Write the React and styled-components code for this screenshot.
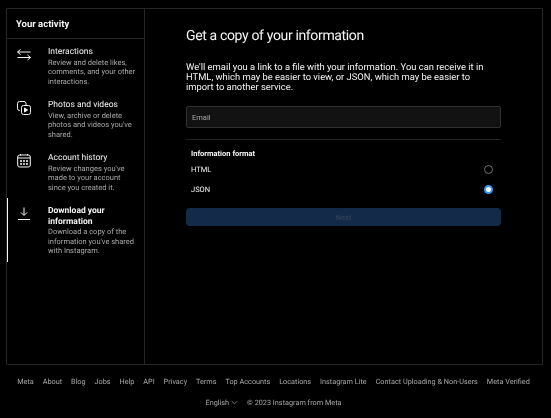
import styled, { createGlobalStyle } from "styled-components";

const GlobalStyle = createGlobalStyle`
  html, body {
    margin: 0;
    background: #000;
    font-family: Roboto, "Liberation Sans", sans-serif;
    color: #f5f5f5;
    text-rendering: geometricPrecision;
  }
`;

const activityItems = [
  {
    title: "Interactions",
    text: "Review and delete likes, comments, and your other interactions.",
    icon: (
      <>
        <path d="M3.5 1.5.5 4l3 2.5" />
        <path d="M.5 4h13" />
        <path d="M10.5 7l3 2.5-3 2.5" />
        <path d="M.5 9.5h13" />
      </>
    ),
  },
  {
    title: "Photos and videos",
    text: "View, archive or delete photos and videos you've shared.",
    icon: (
      <>
        <path d="M3 9.5h-.5a2 2 0 0 1-2-2v-5a2 2 0 0 1 2-2h4.5a2 2 0 0 1 2 2v1.5" />
        <rect x="4.5" y="4.5" width="9" height="9" rx="2" />
        <path d="M7.5 7v4l3-2z" fill="#f5f5f5" />
      </>
    ),
  },
  {
    title: "Account history",
    text: "Review changes you've made to your account since you created it.",
    icon: (
      <>
        <rect x=".7" y="1" width="12.6" height="12" rx="2" />
        <path d="M.7 4h12.6" />
        <path d="M3.5 0v1.5M10.5 0v1.5" />
        <path d="M3 7h2M6 7h2M9 7h2M3 10h2M6 10h2M9 10h2" strokeWidth="1.6" />
      </>
    ),
  },
  {
    title: "Download your information",
    text: "Download a copy of the information you've shared with Instagram.",
    active: true,
    icon: (
      <>
        <path d="M7 .5V8" />
        <path d="M4 5.5l3 3 3-3" />
        <path d="M1 12.5h12" />
      </>
    ),
  },
];

const footerLinks = [
  "Meta",
  "About",
  "Blog",
  "Jobs",
  "Help",
  "API",
  "Privacy",
  "Terms",
  "Top Accounts",
  "Locations",
  "Instagram Lite",
  "Contact Uploading & Non-Users",
  "Meta Verified",
];

const App = () => {
  return (
    <>
      <GlobalStyle />
      <Page>
        <Card>
          <Sidebar>
            <SidebarHeader>Your activity</SidebarHeader>
            <ItemList>
              {activityItems.map(({ title, text, icon, active }) => (
                <ActivityItem key={title} $active={active}>
                  <ItemIcon viewBox="0 0 14 14">{icon}</ItemIcon>
                  <div>
                    <ItemTitle $active={active}>{title}</ItemTitle>
                    <ItemText>{text}</ItemText>
                  </div>
                </ActivityItem>
              ))}
            </ItemList>
          </Sidebar>
          <Main>
            <Heading>Get a copy of your information</Heading>
            <Intro>
              We'll email you a link to a file with your information. You can
              receive it in HTML, which may be easier to view, or JSON, which
              may be easier to import to another service.
            </Intro>
            <EmailInput placeholder="Email" />
            <Divider />
            <FormatLabel>Information format</FormatLabel>
            <FormatRow>
              HTML
              <Radio />
            </FormatRow>
            <FormatRow>
              JSON
              <Radio $checked />
            </FormatRow>
            <NextButton disabled>Next</NextButton>
          </Main>
        </Card>
        <Footer>
          <FooterLinks>
            {footerLinks.map((link) => (
              <span key={link}>{link}</span>
            ))}
          </FooterLinks>
          <FooterMeta>
            <Language>
              English
              <svg width="7" height="7" viewBox="0 0 10 10" fill="none" stroke="currentColor" strokeWidth="1">
                <path d="M1 3l4 4 4-4" />
              </svg>
            </Language>
            <span>© 2023 Instagram from Meta</span>
          </FooterMeta>
        </Footer>
      </Page>
    </>
  );
};

export default App;

const Page = styled.div`
  width: 551px;
  height: 418px;
  padding: 8px 8px 0 6px;
  box-sizing: border-box;
  overflow: hidden;
  will-change: transform;
`;

const Card = styled.div`
  display: flex;
  height: 357px;
  box-sizing: border-box;
  border: 1px solid #262626;
  border-radius: 1px;
`;

const Sidebar = styled.div`
  width: 138px;
  flex-shrink: 0;
  box-sizing: border-box;
  border-right: 1px solid #262626;
`;

const SidebarHeader = styled.div`
  height: 30px;
  box-sizing: border-box;
  padding: 2px 0 0 9px;
  display: flex;
  align-items: center;
  border-bottom: 1px solid #262626;
  font-size: 9.5px;
  font-weight: 700;
`;

const ItemList = styled.div`
  display: flex;
  flex-direction: column;
`;

const ActivityItem = styled.div`
  display: flex;
  gap: 17px;
  padding: 8px 6px 6px 9px;
  border-left: 1px solid ${({ $active }) => ($active ? "#f5f5f5" : "transparent")};
`;

const ItemIcon = styled.svg`
  width: 14px;
  height: 14px;
  flex-shrink: 0;
  margin-top: 1px;
  fill: none;
  stroke: #f5f5f5;
  stroke-width: 1;
`;

const ItemTitle = styled.div`
  font-size: 8.5px;
  line-height: 10.5px;
  font-weight: ${({ $active }) => ($active ? 700 : 400)};
`;

const ItemText = styled.div`
  font-size: 7.5px;
  line-height: 9.5px;
  color: #a8a8a8;
`;

const Main = styled.div`
  flex: 1;
  padding: 18px 41px 0 41px;
  display: flex;
  flex-direction: column;
`;

const Heading = styled.h1`
  margin: 0;
  font-size: 14px;
  line-height: 18px;
  font-weight: 400;
  letter-spacing: -0.35px;
`;

const Intro = styled.p`
  margin: 18px 0 0;
  padding-right: 12px;
  font-size: 9.4px;
  line-height: 10px;
  color: #f5f5f5;
`;

const EmailInput = styled.input`
  margin-top: 13px;
  height: 22px;
  padding: 0 5px;
  box-sizing: border-box;
  background: #121212;
  border: 1px solid #303030;
  border-radius: 2px;
  font: inherit;
  font-size: 7.5px;
  color: #f5f5f5;
  outline: none;
  &::placeholder {
    color: #a8a8a8;
  }
`;

const Divider = styled.div`
  height: 1px;
  margin-top: 11px;
  background: #222;
`;

const FormatLabel = styled.div`
  margin: 9px 5px 1px;
  font-size: 7.5px;
  line-height: 10px;
  font-weight: 700;
`;

const FormatRow = styled.div`
  display: flex;
  justify-content: space-between;
  align-items: center;
  height: 19.5px;
  padding: 0 8px 0 5px;
  font-size: 7.5px;
`;

const Radio = styled.span`
  width: 9px;
  height: 9px;
  box-sizing: border-box;
  border-radius: 50%;
  border: ${({ $checked }) => ($checked ? "2px solid #3897f0" : "1px solid #737373")};
  background: ${({ $checked }) => ($checked ? "#fff" : "transparent")};
`;

const NextButton = styled.button`
  margin-top: 9px;
  height: 18px;
  border: none;
  border-radius: 4px;
  background: #132b48;
  font: inherit;
  font-size: 7.5px;
  font-weight: 700;
  color: #2d3f55;
`;

const Footer = styled.div`
  margin-top: 12px;
  margin-left: -2px;
  font-size: 7.3px;
  color: #a8a8a8;
`;

const FooterLinks = styled.div`
  display: flex;
  justify-content: center;
  gap: 8.9px;
  white-space: nowrap;
`;

const FooterMeta = styled.div`
  display: flex;
  justify-content: center;
  gap: 9px;
  margin-top: 12px;
`;

const Language = styled.span`
  display: inline-flex;
  align-items: center;
  gap: 2px;
`;
